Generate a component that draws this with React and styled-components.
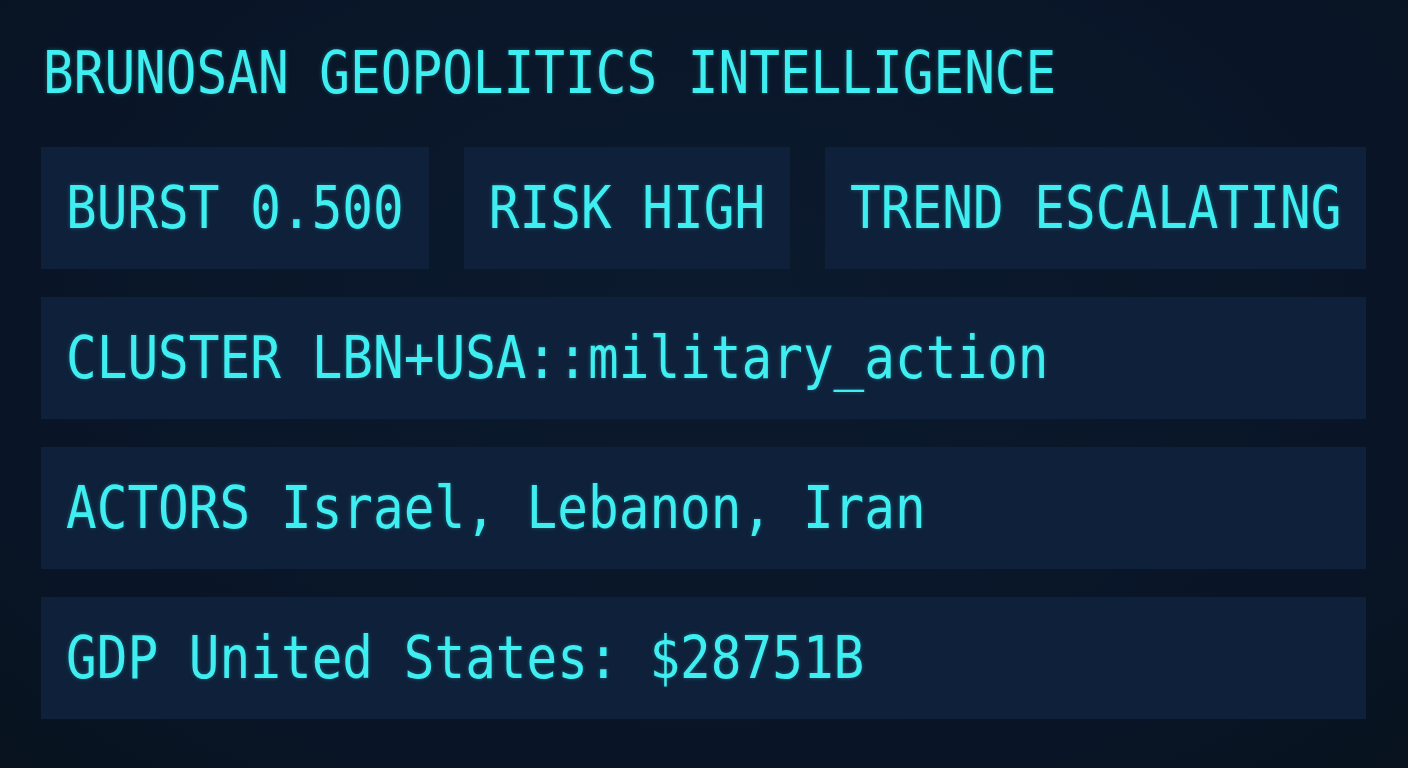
import React from "react"
import styled, { createGlobalStyle } from "styled-components"

const metrics = ["BURST 0.500", "RISK HIGH", "TREND ESCALATING"]
const lines = [
  "CLUSTER LBN+USA::military_action",
  "ACTORS Israel, Lebanon, Iran",
  "GDP United States: $28751B",
]

export default function App() {
  return (
    <>
      <GlobalStyle />
      <Page>
        <Title>
          <Tall>BRUNOSAN GEOPOLITICS INTELLIGENCE</Tall>
        </Title>
        <Stack>
          <MetricRow>
            {metrics.map((m) => (
              <Card key={m}>
                <Tall>{m}</Tall>
              </Card>
            ))}
          </MetricRow>
          {lines.map((l) => (
            <Card key={l} wide>
              <Tall>{l}</Tall>
            </Card>
          ))}
        </Stack>
      </Page>
    </>
  )
}

const GlobalStyle = createGlobalStyle`
  html, body {
    margin: 0;
    padding: 0;
    background: #0a1628;
  }
`

const Page = styled.div`
  box-sizing: border-box;
  width: 100%;
  min-height: 100vh;
  padding: 43px 42px 0 41px;
  background: radial-gradient(ellipse at 50% 40%, #0c1a2e 0%, #091527 70%, #08131f 100%);
  font-family: "DejaVu Sans Mono", "Liberation Mono", monospace;
  color: #3eeef0;
`

// the reference face is taller and narrower than DejaVu Mono
const Tall = styled.span`
  display: inline-block;
  transform: scaleY(1.14);
  text-shadow: 0 0 4px rgba(62, 238, 240, 0.3);
`

const Title = styled.h1`
  margin: 0 0 42px 2px;
  font-size: 51px;
  font-weight: normal;
  line-height: 62px;
`

const Stack = styled.div`
  display: flex;
  flex-direction: column;
  gap: 28px;
`

const MetricRow = styled.div`
  display: flex;
  gap: 35px;
`

const Card = styled.div`
  box-sizing: border-box;
  display: flex;
  align-items: center;
  height: 122px;
  padding: 0 25px;
  ${(p) => (p.wide ? "width: 100%;" : "flex: 0 0 auto;")}
  background: #0e203a;
  font-size: 51px;
  white-space: pre;
`
